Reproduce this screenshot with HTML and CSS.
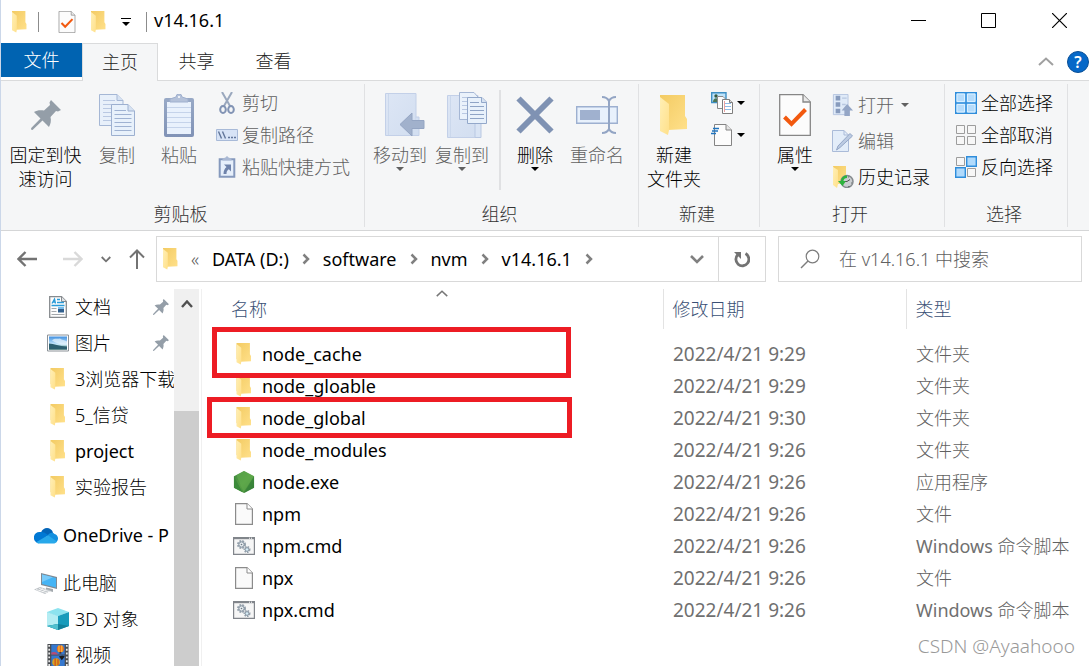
FILE: index.html
```html
<!DOCTYPE html>
<html lang="zh-CN">
<head>
<meta charset="utf-8">
<meta name="viewport" content="width=device-width, initial-scale=1">
<title>v14.16.1</title>
<link rel="stylesheet" href="styles.css">
</head>
<body>
<svg class="sprite" aria-hidden="true">
  <defs>
    <linearGradient id="g-fold" x1="0" y1="0" x2="1" y2="1"><stop offset="0" stop-color="#f3cb63"/><stop offset="1" stop-color="#ffe08a"/></linearGradient>
    <linearGradient id="g-flap" x1="0" y1="0" x2="1" y2="1"><stop offset="0" stop-color="#ffefb5"/><stop offset="1" stop-color="#ffe08a"/></linearGradient>
    <linearGradient id="g-sky" x1="0" y1="0" x2="0" y2="1"><stop offset="0" stop-color="#3f8fe0"/><stop offset=".6" stop-color="#c9e9fb"/><stop offset="1" stop-color="#3c7c62"/></linearGradient>
    <linearGradient id="g-node" x1="0" y1="0" x2="1" y2="1"><stop offset="0" stop-color="#3f873f"/><stop offset=".5" stop-color="#58a045"/><stop offset="1" stop-color="#3a8036"/></linearGradient>
    <linearGradient id="g-board" x1="0" y1="0" x2="0" y2="1"><stop offset="0" stop-color="#98a9c6"/><stop offset="1" stop-color="#8092b6"/></linearGradient>
    <linearGradient id="g-pale" x1="0" y1="0" x2="1" y2="1"><stop offset="0" stop-color="#dde6f5"/><stop offset="1" stop-color="#d2def0"/></linearGradient>
  </defs>
  <symbol id="folder" viewBox="0 0 28 41">
    <path d="M0 0H25V21L27 24V34L8 35 0 30Z" fill="url(#g-fold)"/>
    <path d="M0 2 9 9V35L8 40 0 36Z" fill="url(#g-flap)"/>
  </symbol>
  <symbol id="check-doc" viewBox="0 0 32 42">
    <path d="M.7.7H24L31.3 8V41.3H.7Z" fill="#fcfcfc" stroke="#868686" stroke-width="1.3"/>
    <path d="M24 .7V8h7.3" fill="#e9e9e9" stroke="#868686" stroke-width="1.3"/>
    <path d="M5.500 23 12.500 30 26.500 15.500" fill="none" stroke="#f2590f" stroke-width="4"/>
  </symbol>
  <symbol id="pin" viewBox="0 0 30 30">
    <path d="M20 0 30 10 27 11.500 25 11 19.500 17C20.500 21 19.500 24 18 27L11.500 20.500 1.500 30 0 29.500.2 28 9.500 18.500 3 12C6 10 9.500 9.800 13 10.500L19 5 18.500 2.500Z" fill="#949ea8"/>
  </symbol>
  <symbol id="copy" viewBox="0 0 36 42">
    <path d="M.5.5H18L24 6.500V31.500H.5Z" fill="#e8f0fa" stroke="#a5b7d5"/>
    <path d="M18 .5V6.500h6" fill="#d6e2f2" stroke="#a5b7d5"/>
    <path d="M4 6.500H16M4 10.500H20M4 14.500H20M4 18.500H20M4 22.500H20M4 26.500H20" stroke="#b9c8e2"/>
    <path d="M12.500 10.500H29L35.500 17V41.500H12.500Z" fill="#e8f1fb" stroke="#9db0d0"/>
    <path d="M29 10.500V17h6.500" fill="#d6e2f2" stroke="#9db0d0"/>
    <path d="M15.500 16.500H27M15.500 20.500H32.500M15.500 24.500H32.500M15.500 28.500H32.500M15.500 32.500H32.500M15.500 36.500H32.500" stroke="#9fb2d2"/>
  </symbol>
  <symbol id="paste" viewBox="0 0 30 43">
    <rect y="4" width="30" height="39" rx="2" fill="url(#g-board)"/>
    <path d="M3 8H27V40H3Z" fill="#e9f1fc"/>
    <path d="M3 13.500H27M3 18.500H27M3 23.500H27M3 28.500H27M3 33.500H27" stroke="#c5d3ea"/>
    <path d="M6 8V5L12 3a3 3 0 0 1 6 0L24 5V8Z" fill="#b4c1d9" stroke="#a0b0ce"/>
    <circle cx="15" cy="3" r="1" fill="#fff"/>
  </symbol>
  <symbol id="cut" viewBox="0 0 16 22">
    <path d="M3 0 11 14M13 0 5 14" stroke="#9aa8be" stroke-width="2"/>
    <ellipse cx="4" cy="17.500" rx="2.800" ry="3.500" fill="none" stroke="#8193b4" stroke-width="2"/>
    <ellipse cx="12" cy="17.500" rx="2.800" ry="3.500" fill="none" stroke="#8193b4" stroke-width="2"/>
  </symbol>
  <symbol id="path" viewBox="0 0 22 12">
    <path d="M.5.5H21.500V11.500H.5Z" fill="#d7e3f6" stroke="#a8bad8"/>
    <path d="M2.500 2.500 5.500 9.500M6.500 2.500 9.500 9.500" stroke="#62769a" stroke-width="1.400"/>
    <path d="M12 8.500h2M15 8.500h2M18 8.500h2" stroke="#62769a" stroke-width="1.600"/>
  </symbol>
  <symbol id="shortcut" viewBox="0 0 17 22">
    <path d="M1.200 3.200H15.800V20.800H1.200Z" fill="#e6effb" stroke="#8599bd" stroke-width="2"/>
    <path d="M4 4.500V2.500L7 1.500Q8.500-.8 10 1.500L13 2.500V4.500Z" fill="#a9b8d3"/>
    <path d="M5.500 8.500H12.500V15.500L10.300 13.300C8.500 14.500 8 16 8 18H5C5 15 6 12.500 8 11Z" fill="#6f83ab"/>
  </symbol>
  <symbol id="move" viewBox="-10 0 50 44">
    <path d="M.5.5H31V42.500H.5Z" fill="url(#g-pale)" stroke="#c3d0e8"/>
    <path d="M31 24h3V42.500H28" fill="#d3dff1" stroke="#c3d0e8"/>
    <path d="M3.500 1V42" stroke="#cbd8ec"/>
    <path d="M15 31.500 27 20V27.500H39V35.500H27V43Z" fill="#a1b1cc" stroke="#94a5c3"/>
  </symbol>
  <symbol id="copyto" viewBox="-10 0 50 46">
    <path d="M.5 3.500H31V45.500H.5Z" fill="url(#g-pale)" stroke="#c3d0e8"/>
    <path d="M28 32V45.500H34V32" fill="#d9e4f4" stroke="#b9c8e2"/>
    <path d="M3.500 4V45" stroke="#cbd8ec"/>
    <path d="M12.500.5H27L31 5V27.500H12.500Z" fill="#eaf2fb" stroke="#a5b7d5"/>
    <path d="M15 5.500h8M15 9.500h6M15 13.500h6M15 17.500h6M15 21.500h6" stroke="#b9c8e2"/>
    <path d="M20.500 5.500H35L39.500 10V31.500H20.500Z" fill="#e8f1fb" stroke="#93a8ca"/>
    <path d="M34.500 5.500V10.500h5" fill="#d6e2f2" stroke="#93a8ca"/>
    <path d="M23 10.500h9M23 14.500h14M23 18.500h14M23 22.500h14M23 26.500h14" stroke="#8fa4c6"/>
  </symbol>
  <symbol id="delete" viewBox="0 0 38 38">
    <path d="M2.500 2.500 35.500 35.500M35.500 2.500 2.500 35.500" stroke="#7f92b3" stroke-width="6"/>
  </symbol>
  <symbol id="rename" viewBox="0 0 42 40">
    <path d="M.7 11.700H41.300V28.300H.7Z" fill="#e8f1fc" stroke="#9db0d0" stroke-width="1.400"/>
    <path d="M4 15H24V25H4Z" fill="#a0b1cf"/>
    <path d="M33 5V35" stroke="#93a5c4" stroke-width="2"/>
    <path d="M26 2c4 0 5.500 1 7 4 1.500-3 3-4 7-4M26 38c4 0 5.500-1 7-4 1.500 3 3 4 7 4" fill="none" stroke="#93a5c4" stroke-width="2"/>
  </symbol>
  <symbol id="new-item" viewBox="0 0 22 22">
    <path d="M.7.7H15V10.500H.7Z" fill="#bfe3fa" stroke="#3f90c4" stroke-width="1.400"/>
    <circle cx="5" cy="4" r="1.700" fill="#34593f"/><path d="M2 10c0-5 6-5 6 0Z" fill="#4b7657"/>
    <path d="M6.500 4.500H12L14 6.500V16.500H6.500Z" fill="#fbfbfb" stroke="#8a8a8a"/>
    <path d="M11.500 7.500H18.500L21.500 10.500V21.500H11.500Z" fill="#fff" stroke="#7e7e7e"/>
    <path d="M14 11.500h6M14 14.500h6M14 17.500h6" stroke="#8fbbe6"/><path d="M13.500 9v11" stroke="#eba0a0"/>
    <path d="M18.500 7.500v3h3" fill="#ddd" stroke="#7e7e7e"/>
  </symbol>
  <symbol id="easy" viewBox="0 0 22 22">
    <path d="M3.500.5H15L20.500 6V21.500H3.500Z" fill="#fcfcfc" stroke="#848484"/>
    <path d="M15 .5V6h5.500" fill="#e4e4e4" stroke="#848484"/>
    <path d="M2 4.500H8M1 7H7M0 9.500H5" stroke="#1f74c0" stroke-width="1.500"/>
  </symbol>
  <symbol id="open" viewBox="0 0 22 24">
    <path d="M.5.500H16.500V22.500H.5Z" fill="#dfeaf8" stroke="#b3c3de"/>
    <path d="M3 2h5v5H3ZM3 9h5v5H3ZM3 16h5v5H3Z" fill="#879bbd"/>
    <path d="M10 4.500h5M10 11.500h4" stroke="#b8c7e0" stroke-width="1.500"/>
    <path d="M15.500 11 22 18H18.500V24H12.500V18H9.500Z" fill="#94a6c6"/>
  </symbol>
  <symbol id="edit" viewBox="0 0 22 22">
    <path d="M.5.5H12L16.500 5V21.500H.5Z" fill="#e3edf9" stroke="#aabbd8"/>
    <path d="M12 .5V5h4.500" fill="none" stroke="#aabbd8"/>
    <path d="M18 3.500 20.500 6 8 17.500 4.500 20 6 16Z" fill="#bccbe2" stroke="#94a7c7"/>
  </symbol>
  <symbol id="history" viewBox="0 0 22 22">
    <path d="M1 0H14V18L5 18Z" fill="url(#g-fold)"/><path d="M1 1 6 4V18L5 22 1 19Z" fill="url(#g-flap)"/>
    <circle cx="15" cy="15.500" r="6" fill="#c9cdd0" stroke="#858a8e" stroke-width="1.500"/>
    <path d="M15 15.500l3-2M15 15.500h-3" stroke="#555"/><path d="M16 20.500h2M19 17h1M16 11h1" stroke="#6d7275"/>
    <path d="M15 9.500C11 9.500 9 12 9 15H6L10.500 20 14 15H11.500C11.500 13 13 12 15 12Z" fill="#2db33e"/>
  </symbol>
  <symbol id="sel-all" viewBox="0 0 22 22">
    <path d="M.7.7H21.300V21.300H.7ZM11 1V21M1 11H21" fill="#b5dcfc" stroke="#2f8ddb" stroke-width="1.500"/>
    <path d="M2 2h7.500v7.500H2ZM12.500 2H20v7.500h-7.500ZM2 12.500h7.500V20H2ZM12.500 12.500H20V20h-7.500Z" fill="none" stroke="#dbf0ff"/>
  </symbol>
  <symbol id="sel-none" viewBox="0 0 22 22">
    <path d="M1.500 1.500h8v8h-8ZM12.500 1.500h8v8h-8ZM1.500 12.500h8v8h-8ZM12.500 12.500h8v8h-8Z" fill="#f7f7f7" stroke="#9d9d9d"/>
  </symbol>
  <symbol id="sel-inv" viewBox="0 0 22 22">
    <path d="M1.500 1.500h8v8h-8ZM12.500 12.500h8v8h-8Z" fill="#f7f7f7" stroke="#9d9d9d"/>
    <path d="M11.700.7H21.300V10.300H11.700ZM.7 11.700H10.300V21.300H.7Z" fill="#b0dafc" stroke="#2f8ddb" stroke-width="1.400"/>
  </symbol>
  <symbol id="caret" viewBox="0 0 8 4"><path d="M0 0H8L4 4Z" fill="currentColor"/></symbol>
  <symbol id="chev-right" viewBox="0 0 8 12"><path d="M1.500 1.500 6 6 1.500 10.500" fill="none" stroke="currentColor" stroke-width="2.500"/></symbol>
  <symbol id="chev-down" viewBox="0 0 14 9"><path d="M1 1 7 7 13 1" fill="none" stroke="currentColor" stroke-width="2.600"/></symbol>
  <symbol id="chev-up" viewBox="0 0 16 9"><path d="M1 8 8 1.500 15 8" fill="none" stroke="currentColor" stroke-width="2"/></symbol>
  <symbol id="arrow" viewBox="0 0 20 16"><path d="M8.500 1 1.500 8 8.500 15M1.500 8H20" fill="none" stroke="currentColor" stroke-width="2.400"/></symbol>
  <symbol id="arrow-up" viewBox="0 0 16 20"><path d="M1 8.500 8 1.500 15 8.500M8 1.500V20" fill="none" stroke="currentColor" stroke-width="2"/></symbol>
  <symbol id="refresh" viewBox="0 0 16 17">
    <path d="M11.500 2.600A6.500 6.500 0 1 1 4 3.500" fill="none" stroke="#737373" stroke-width="2.800"/>
    <path d="M0 1H7V8Z" fill="#737373"/>
  </symbol>
  <symbol id="search" viewBox="0 0 20 20"><circle cx="12.500" cy="7.500" r="6.300" fill="none" stroke="#7c7c7c" stroke-width="1.200"/><path d="M8 12 1 19" stroke="#7c7c7c" stroke-width="1.400"/></symbol>
  <symbol id="documents" viewBox="0 0 18 22">
    <path d="M.7.7H12.500L17.300 5.500V21.300H.7Z" fill="#fdfdfd" stroke="#868a8e" stroke-width="1.300"/>
    <path d="M12.500.7V5.500h4.800" fill="#e0e3e6" stroke="#868a8e"/>
    <path d="M3 7.500 5.500 3 6.500 7.500M3.500 6h3M8 3.500h3M8 6.500h7M2.500 9.500h13" fill="none" stroke="#2a9bd8" stroke-width="1.300"/>
    <path d="M2.500 12.500h5M2.500 15.500h5M2.500 18.500h13" stroke="#a4a8ac"/><path d="M9 11h6v5.500H9Z" fill="#315f8d"/><path d="M9 11h6v2H9Z" fill="#78bdec"/>
  </symbol>
  <symbol id="pictures" viewBox="0 0 22 17">
    <path d="M.5.5H21.500V16.500H.5Z" fill="#fff" stroke="#8c9298"/><path d="M2 2H20V15H2Z" fill="url(#g-sky)"/>
    <path d="M2 9C7 9 12 12 20 12V15H2Z" fill="#2d6070"/><path d="M5 6c3-3 5-1 8-2 2 2 4 1 7 3v3c-5 1-10-1-15-4Z" fill="#e8f5fc" opacity=".7"/>
  </symbol>
  <symbol id="onedrive" viewBox="0 0 24 16">
    <path d="M7 5C9-1 17-1 19 5L14 10Z" fill="#0364b8"/>
    <path d="M6 4.500C9 4 11 5 14 7.500L5 15.800A5.500 5.500 0 0 1 6 4.500Z" fill="#0078d4"/>
    <path d="M14 7.500C16 5 19 4.500 20.500 6.500c4 1 4.500 6 2 8L13 9Z" fill="#1490df"/>
    <path d="M2.500 14.500 14 7.800 23 14c-1 1.500-2 2-4 2H5c-1 0-2-.5-2.500-1.500Z" fill="#28a8ea"/>
  </symbol>
  <symbol id="pc" viewBox="0 0 24 21">
    <path d="M7 0 23 4V16L7 12Z" fill="#7f8a94"/><path d="M8 1.500 22 5V14.500L8 11Z" fill="#45b4f5"/><path d="M8 1.500 19 4.300 8 9Z" fill="#79cbfa"/>
    <path d="M12 14.500 19 16V19L12 17Z" fill="#a3a9ae"/><path d="M0 16.500 6 14 17 17.500 11 21Z" fill="#bfc4c8"/><path d="M2 16.500 13 19.800M5 15.300 15 18.500M9 15.500 5 18M12 16.500 8 19" stroke="#fff" stroke-width=".7"/>
  </symbol>
  <symbol id="cube" viewBox="0 0 22 22">
    <path d="M0 4 11 0 22 4 11 8Z" fill="#8de3ef"/><path d="M0 4 11 8V22L0 18Z" fill="#4ac6dc"/><path d="M0 4 11 8V16L0 18Z" fill="#b4edf3"/>
    <path d="M22 4 11 8V22L22 18Z" fill="#199bbb"/><path d="M11 16 22 18 11 22 0 18Z" fill="#13809a"/><path d="M0 18 11 16V22Z" fill="#50bfce"/>
  </symbol>
  <symbol id="video" viewBox="0 0 22 23">
    <path d="M0 0H22V23H0Z" fill="#484b4f"/><path d="M4 0.5H18V11H4ZM4 12H18V23H4Z" fill="#3678cf"/>
    <path d="M1.800 1V23M20.200 1V23" stroke="#e8e8e8" stroke-width="1.800" stroke-dasharray="2 2"/>
    <circle cx="13.500" cy="5" r="3.700" fill="#e66c22"/><path d="M12 1.500V8.500M15 1.500V8.500" stroke="#ffd43b"/><path d="M12.500 8.500h2v1.500h-2Z" fill="#552b15"/>
    <path d="M4 9c3-1 5-1 7 2H4Z" fill="#ba4b72"/><path d="M12 13c2-1 5-1 6 0l-3 4Z" fill="#1b1b1b"/><circle cx="9" cy="19" r="4" fill="#dca21e"/><path d="M8 15v8M11 16v6" stroke="#c83722"/>
  </symbol>
  <symbol id="node" viewBox="0 0 22 23">
    <path d="M11 0 21.500 5.500V17.500L11 23 .5 17.500V5.500Z" fill="url(#g-node)"/>
    <path d="M.5 5.500 9.500 22.200 11 23 .5 17.500Z" fill="#3c8b3b"/><path d="M3 4.500 11 0 21.500 5.500 10.500 22Z" fill="#62ad4e" opacity=".6"/><path d="M21.500 5.500V17.500L11 23Z" fill="#2e7d37" opacity=".6"/>
  </symbol>
  <symbol id="file" viewBox="0 0 18 22">
    <path d="M.6.600H12L17.400 6V21.400H.6Z" fill="#fafafa" stroke="#8b8b8b" stroke-width="1.200"/><path d="M12 .6V6h5.400" fill="#fff" stroke="#8b8b8b"/>
  </symbol>
  <symbol id="cmd" viewBox="0 0 22 18">
    <path d="M.6.600H21.400V17.400H.6Z" fill="#f6f6f6" stroke="#81858b" stroke-width="1.200"/><path d="M.6 1.300H21.400" stroke="#81858b" stroke-width="1.800"/><path d="M16 1.200h1M18 1.200h1" stroke="#fff"/>
    <circle cx="8.500" cy="7.500" r="3.500" fill="#dde4ea" stroke="#96a2ad" stroke-width="2" stroke-dasharray="1.800 1"/><circle cx="8.500" cy="7.500" r="2.600" fill="#e8edf0" stroke="#8996a3"/><circle cx="8.500" cy="7.500" r=".8" fill="#6c7985"/>
    <circle cx="14" cy="12.500" r="2.600" fill="#dde4ea" stroke="#96a2ad" stroke-width="1.800" stroke-dasharray="1.500 1"/><circle cx="14" cy="12.500" r="1.800" fill="#d7eef7" stroke="#8996a3"/>
  </symbol>
</svg>

<div class="window">
  <header class="titlebar">
    <svg class="i-folder"><use href="#folder"/></svg>
    <span class="divider"></span>
    <button class="qa" aria-label="属性"><svg class="i-qa-doc"><use href="#check-doc"/></svg></button>
    <button class="qa" aria-label="新建文件夹"><svg class="i-folder"><use href="#folder"/></svg></button>
    <button class="qa" aria-label="自定义快速访问工具栏"><svg class="i-customize" viewBox="0 0 10 8"><path d="M0 .5H10" stroke="#000"/><path d="M1 4H9L5 8Z"/></svg></button>
    <span class="divider divider-title"></span>
    <h1 class="title">v14.16.1</h1>
    <div class="controls">
      <button aria-label="最小化"><svg viewBox="0 0 15 15"><path d="M0 7.500H15" stroke="#000"/></svg></button>
      <button aria-label="最大化"><svg viewBox="0 0 15 15"><path d="M.5.5H14.500V14.500H.5Z" fill="none" stroke="#000"/></svg></button>
      <button class="close" aria-label="关闭"><svg viewBox="0 0 15 15"><path d="M0 0 15 15M15 0 0 15" stroke="#000" stroke-width="1.200"/></svg></button>
    </div>
  </header>

  <nav class="tabs" aria-label="功能区选项卡">
    <button class="tab tab-file">文件</button>
    <button class="tab tab-active">主页</button>
    <button class="tab">共享</button>
    <button class="tab">查看</button>
    <div class="tab-tools">
      <button class="collapse" aria-label="折叠功能区"><svg class="i-collapse"><use href="#chev-up"/></svg></button>
      <button class="help" aria-label="帮助">?</button>
    </div>
  </nav>

  <section class="ribbon" aria-label="主页">
    <div class="group">
      <div class="group-body">
        <button class="big big-wide"><span class="big-icon"><svg class="i-pin-big"><use href="#pin"/></svg></span><span>固定到快<br>速访问</span></button>
        <button class="big off"><span class="big-icon"><svg class="i-copy"><use href="#copy"/></svg></span><span>复制</span></button>
        <button class="big off"><span class="big-icon"><svg class="i-paste"><use href="#paste"/></svg></span><span>粘贴</span></button>
        <div class="list">
          <button class="small off"><svg class="i-cell"><use href="#cut"/></svg>剪切</button>
          <button class="small off"><svg class="i-cell"><use href="#path"/></svg>复制路径</button>
          <button class="small off"><svg class="i-cell"><use href="#shortcut"/></svg>粘贴快捷方式</button>
        </div>
      </div>
      <h2 class="group-name">剪贴板</h2>
    </div>
    <div class="group group-organize">
      <div class="group-body">
        <button class="big off"><span class="big-icon"><svg class="i-move"><use href="#move"/></svg></span><span>移动到</span><svg class="i-caret"><use href="#caret"/></svg></button>
        <button class="big off"><span class="big-icon"><svg class="i-copyto"><use href="#copyto"/></svg></span><span>复制到</span><svg class="i-caret"><use href="#caret"/></svg></button>
        <span class="rule"></span>
        <button class="big"><span class="big-icon"><svg class="i-delete"><use href="#delete"/></svg></span><span>删除</span><svg class="i-caret"><use href="#caret"/></svg></button>
        <button class="big off"><span class="big-icon"><svg class="i-rename"><use href="#rename"/></svg></span><span>重命名</span></button>
      </div>
      <h2 class="group-name">组织</h2>
    </div>
    <div class="group">
      <div class="group-body">
        <button class="big"><span class="big-icon"><svg class="i-folder-big"><use href="#folder"/></svg></span><span>新建<br>文件夹</span></button>
        <div class="list">
          <button class="small" aria-label="新建项目"><svg class="i-cell"><use href="#new-item"/></svg><svg class="i-caret"><use href="#caret"/></svg></button>
          <button class="small" aria-label="轻松访问"><svg class="i-cell"><use href="#easy"/></svg><svg class="i-caret"><use href="#caret"/></svg></button>
        </div>
      </div>
      <h2 class="group-name">新建</h2>
    </div>
    <div class="group">
      <div class="group-body">
        <button class="big"><span class="big-icon"><svg class="i-props"><use href="#check-doc"/></svg></span><span>属性</span><svg class="i-caret"><use href="#caret"/></svg></button>
        <div class="list list-tall">
          <button class="small off"><svg class="i-cell"><use href="#open"/></svg><span class="with-caret">打开<svg class="i-caret"><use href="#caret"/></svg></span></button>
          <button class="small off"><svg class="i-cell"><use href="#edit"/></svg>编辑</button>
          <button class="small"><svg class="i-cell"><use href="#history"/></svg>历史记录</button>
        </div>
      </div>
      <h2 class="group-name">打开</h2>
    </div>
    <div class="group">
      <div class="group-body">
        <div class="list">
          <button class="small"><svg class="i-cell"><use href="#sel-all"/></svg>全部选择</button>
          <button class="small"><svg class="i-cell"><use href="#sel-none"/></svg>全部取消</button>
          <button class="small"><svg class="i-cell"><use href="#sel-inv"/></svg>反向选择</button>
        </div>
      </div>
      <h2 class="group-name">选择</h2>
    </div>
  </section>

  <div class="navbar">
    <div class="history">
      <button aria-label="后退"><svg class="i-arrow"><use href="#arrow"/></svg></button>
      <button class="forward" aria-label="前进"><svg class="i-arrow"><use href="#arrow"/></svg></button>
      <button aria-label="最近位置"><svg class="i-recent"><use href="#chev-down"/></svg></button>
      <button aria-label="上移"><svg class="i-up"><use href="#arrow-up"/></svg></button>
    </div>
    <div class="address">
      <svg class="i-folder"><use href="#folder"/></svg>
      <span class="more">«</span>
      <button class="crumb">DATA (D:)</button><svg class="i-chev"><use href="#chev-right"/></svg>
      <button class="crumb">software</button><svg class="i-chev"><use href="#chev-right"/></svg>
      <button class="crumb">nvm</button><svg class="i-chev"><use href="#chev-right"/></svg>
      <button class="crumb">v14.16.1</button><svg class="i-chev"><use href="#chev-right"/></svg>
      <button class="drop" aria-label="以前的位置"><svg class="i-drop"><use href="#chev-down"/></svg></button>
      <button class="reload" aria-label="刷新"><svg class="i-reload"><use href="#refresh"/></svg></button>
    </div>
    <label class="search">
      <svg class="i-search"><use href="#search"/></svg>
      <input type="search" placeholder="在 v14.16.1 中搜索" aria-label="搜索">
    </label>
  </div>

  <div class="content">
    <nav class="tree" aria-label="导航窗格">
      <a class="node" href="#"><svg class="i-cell"><use href="#documents"/></svg><span>文档</span><svg class="i-pin"><use href="#pin"/></svg></a>
      <a class="node" href="#"><svg class="i-cell"><use href="#pictures"/></svg><span>图片</span><svg class="i-pin"><use href="#pin"/></svg></a>
      <a class="node" href="#"><svg class="i-cell"><use href="#folder"/></svg><span>3浏览器下载</span></a>
      <a class="node" href="#"><svg class="i-cell"><use href="#folder"/></svg><span>5_信贷</span></a>
      <a class="node" href="#"><svg class="i-cell"><use href="#folder"/></svg><span class="latin">project</span></a>
      <a class="node" href="#"><svg class="i-cell"><use href="#folder"/></svg><span>实验报告</span></a>
      <a class="node node-root" href="#"><svg class="i-root"><use href="#onedrive"/></svg><span class="latin">OneDrive - P</span></a>
      <a class="node node-root" href="#"><svg class="i-root"><use href="#pc"/></svg><span>此电脑</span></a>
      <a class="node" href="#"><svg class="i-cell"><use href="#cube"/></svg><span>3D 对象</span></a>
      <a class="node" href="#"><svg class="i-cell"><use href="#video"/></svg><span>视频</span></a>
    </nav>
    <div class="scroll"><button aria-label="向上滚动"><svg class="i-scroll" viewBox="0 0 12 8"><path d="M1 7 6 1.500 11 7" fill="none" stroke="#505050" stroke-width="2.400"/></svg></button><div class="thumb"></div></div>

    <main class="files">
      <table>
        <colgroup><col class="c-name"><col class="c-date"><col></colgroup>
        <thead>
          <tr><th>名称<svg class="i-sort"><use href="#chev-up"/></svg></th><th>修改日期</th><th>类型</th></tr>
        </thead>
        <tbody>
          <tr><td><span class="entry"><svg class="i-cell"><use href="#folder"/></svg>node_cache</span></td><td class="date">2022/4/21 9:29</td><td>文件夹</td></tr>
          <tr><td><span class="entry"><svg class="i-cell"><use href="#folder"/></svg>node_gloable</span></td><td class="date">2022/4/21 9:29</td><td>文件夹</td></tr>
          <tr><td><span class="entry"><svg class="i-cell"><use href="#folder"/></svg>node_global</span></td><td class="date">2022/4/21 9:30</td><td>文件夹</td></tr>
          <tr><td><span class="entry"><svg class="i-cell"><use href="#folder"/></svg>node_modules</span></td><td class="date">2022/4/21 9:26</td><td>文件夹</td></tr>
          <tr><td><span class="entry"><svg class="i-cell"><use href="#node"/></svg>node.exe</span></td><td class="date">2022/4/21 9:26</td><td>应用程序</td></tr>
          <tr><td><span class="entry"><svg class="i-cell"><use href="#file"/></svg>npm</span></td><td class="date">2022/4/21 9:26</td><td>文件</td></tr>
          <tr><td><span class="entry"><svg class="i-cell"><use href="#cmd"/></svg>npm.cmd</span></td><td class="date">2022/4/21 9:26</td><td><span class="latin">Windows</span> 命令脚本</td></tr>
          <tr><td><span class="entry"><svg class="i-cell"><use href="#file"/></svg>npx</span></td><td class="date">2022/4/21 9:26</td><td>文件</td></tr>
          <tr><td><span class="entry"><svg class="i-cell"><use href="#cmd"/></svg>npx.cmd</span></td><td class="date">2022/4/21 9:26</td><td><span class="latin">Windows</span> 命令脚本</td></tr>
        </tbody>
      </table>
      <div class="mark mark-cache"></div>
      <div class="mark mark-global"></div>
      <div class="watermark">CSDN @Ayaahooo</div>
    </main>
  </div>
</div>
</body>
</html>
```
FILE: styles.css
```css
* { box-sizing: border-box; }

body {
  margin: 0;
  font: 300 18px/24px "Noto Sans", "Noto Sans CJK SC", sans-serif;
  color: #000;
  background: #fff;
}

button {
  padding: 0;
  border: 0;
  background: none;
  font: inherit;
  color: inherit;
}

svg { display: block; flex: none; }
.sprite { position: absolute; width: 0; height: 0; }

.window {
  display: flex;
  flex-direction: column;
  height: 100vh;
  overflow: hidden;
  border-left: 1px solid #cbd7e9;
}

/* Title bar */
.titlebar {
  display: flex;
  flex: none;
  align-items: center;
  height: 43px;
  padding-left: 11px;
}
.i-folder { width: 15px; height: 22px; }
.divider { width: 1px; height: 20px; margin: 0 19px 0 11px; background: #8c8c8c; }
.divider-title { margin: 0 7px 0 0; }
.qa { margin-right: 15px; }
.i-qa-doc { width: 18px; height: 22px; }
.i-customize { width: 10px; height: 8px; }
.title { margin: 0 0 3px; font-size: 18px; font-weight: 400; line-height: 24px; }
.controls { display: flex; height: 40px; margin: 0 0 3px auto; }
.controls button { display: grid; place-items: center; width: 70px; }
.controls .close { width: 60px; margin-left: 6px; }
.controls svg { width: 15px; height: 15px; }

/* Tabs */
.tabs {
  display: flex;
  flex: none;
  height: 38px;
  border-bottom: 1px solid #dadbdc;
}
.tab { width: 77px; height: 36px; color: #222; }
.tab-file { width: 81px; height: 34px; background: #0063b1; color: #fff; }
.tab-active {
  width: 76px;
  height: 38px;
  padding-bottom: 2px;
  border: 1px solid #dadbdc;
  border-bottom: 0;
  background: #f5f6f7;
}
.tab-tools { display: flex; align-items: center; gap: 13px; margin-left: auto; }
.i-collapse { width: 16px; height: 9px; color: #a0a0a0; }
.help {
  width: 22px;
  height: 22px;
  border: 1px solid #0a4f96;
  border-radius: 50%;
  background: #0668c8;
  color: #fff;
  font-weight: 600;
  font-size: 16px;
  line-height: 20px;
}

/* Ribbon */
.ribbon {
  display: flex;
  flex: none;
  height: 150px;
  border-bottom: 1px solid #d5d6d7;
  background: #f5f6f7;
}
.group {
  display: flex;
  flex-direction: column;
  margin: 3px 0;
  border-right: 1px solid #e0e1e3;
}
.group-body { display: flex; flex: 1; padding: 3px 14px 0 4px; }
.group-organize .group-body { padding-right: 10px; }
.group-name {
  margin: 0 0 1px;
  padding-right: 4px;
  font-size: 18px;
  font-weight: 300;
  line-height: 24px;
  text-align: center;
  color: #333;
}
.big {
  display: flex;
  flex-direction: column;
  align-items: center;
  width: 62px;
  white-space: nowrap;
}
.big-wide { width: 81px; }
.big-icon { display: grid; place-items: center; height: 56px; }
.off { color: #616161; }
.i-caret { width: 8px; height: 4px; color: #000; }
.off .i-caret { color: #616161; }
.rule { width: 2px; height: 100px; margin: 3px 3px 0 6px; background: #e0e1e3; }
.list { padding-left: 6px; }
.small {
  display: flex;
  align-items: center;
  gap: 4px;
  height: 32px;
  white-space: nowrap;
}
.list-tall .small { height: 36px; }
.with-caret { display: flex; align-items: center; gap: 7px; }
.i-cell { width: 22px; height: 22px; }
.i-pin-big { width: 30px; height: 30px; }
.i-copy { width: 36px; height: 42px; }
.i-paste { width: 30px; height: 43px; }
.i-move { width: 50px; height: 44px; }
.i-copyto { width: 50px; height: 46px; }
.i-delete { width: 38px; height: 38px; }
.i-rename { width: 42px; height: 40px; }
.i-folder-big { width: 28px; height: 41px; }
.i-props { width: 32px; height: 42px; }

/* Navigation bar */
.navbar {
  display: flex;
  flex: none;
  height: 58px;
  padding: 5px 7px 7px 0;
}
.history {
  display: flex;
  align-items: center;
  justify-content: space-between;
  width: 155px;
  padding: 0 11px 0 16px;
  color: #737373;
}
.i-arrow { width: 20px; height: 16px; }
.forward { margin-left: 8px; color: #d9d9d9; }
.forward svg { transform: scaleX(-1); }
.i-recent { width: 10px; height: 7px; }
.i-up { width: 16px; height: 20px; }
.address, .search { display: flex; align-items: center; border: 1px solid #d9d9d9; }
.address { flex: 1; padding-left: 6px; }
.more { margin: 0 13px; color: #555; }
.crumb { font-weight: 400; white-space: nowrap; }
.i-chev { width: 8px; height: 12px; margin: 0 13px; color: #808080; }
.drop { margin: 0 14px 0 auto; }
.i-drop { width: 14px; height: 9px; color: #808080; }
.reload { display: grid; place-items: center; align-self: stretch; width: 47px; border-left: 1px solid #d9d9d9; }
.i-reload { width: 16px; height: 17px; }
.search { flex: 0 1 304px; gap: 19px; min-width: 0; margin-left: 12px; padding-left: 21px; }
.i-search { width: 20px; height: 20px; }
.search input {
  flex: 1;
  min-width: 0;
  padding: 0;
  border: 0;
  outline: 0;
  background: none;
  font: inherit;
}
.search input::placeholder { color: #616161; }

/* Navigation pane */
.content { display: flex; flex: 1; min-height: 0; }
.tree { width: 173px; overflow: hidden; }
.node {
  display: flex;
  align-items: center;
  gap: 6px;
  height: 36px;
  padding-left: 46px;
  color: #000;
  text-decoration: none;
  white-space: nowrap;
}
.node-root { gap: 5px; margin: 12px 0; padding-left: 33px; }
.node-root + .node-root { margin-bottom: 0; }
.i-root { width: 24px; height: 21px; }
.i-pin { width: 16px; height: 16px; margin: 0 5px 0 auto; }
.scroll { display: flex; flex-direction: column; flex: none; width: 25px; background: #f0f0f0; }
.scroll button { display: grid; place-items: center; height: 30px; }
.i-scroll { width: 12px; height: 8px; }
.thumb { flex: 1; margin-top: 92px; background: #cdcdcd; }
.latin { font-weight: 400; }

/* File list */
.files { position: relative; flex: 1; min-width: 0; margin-left: 2px; border-left: 1px solid #f0f0f0; }
.files table { width: 100%; border-collapse: collapse; table-layout: fixed; }
.c-name { width: 461px; }
.c-date { width: 243px; }
.files th {
  position: relative;
  height: 40px;
  padding: 0 0 0 9px;
  border-left: 1px solid #e3e3e3;
  color: #3a5075;
  font-weight: 300;
  text-align: left;
}
.files th:first-child { padding-left: 29px; border-left: 0; }
.i-sort { position: absolute; top: 1px; left: 234px; width: 12px; height: 7px; color: #777; }
.files tbody::before { content: ""; display: block; height: 9px; }
.files td { height: 32px; padding: 0 0 0 10px; color: #616161; white-space: nowrap; }
.files td:first-child { padding-left: 31px; color: #000; }
.files .date { font-size: 19px; font-weight: 400; color: #707070; }
.files .latin { color: #707070; }
.entry { display: flex; align-items: center; gap: 7px; font-weight: 400; }

.mark { position: absolute; border: 5px solid #ed1c24; }
.mark-cache { top: 38px; left: 10px; width: 359px; height: 51px; }
.mark-global { top: 108px; left: 5px; width: 365px; height: 41px; }
.watermark { position: absolute; right: 14px; bottom: 8px; font-size: 19px; color: #999; }
```
